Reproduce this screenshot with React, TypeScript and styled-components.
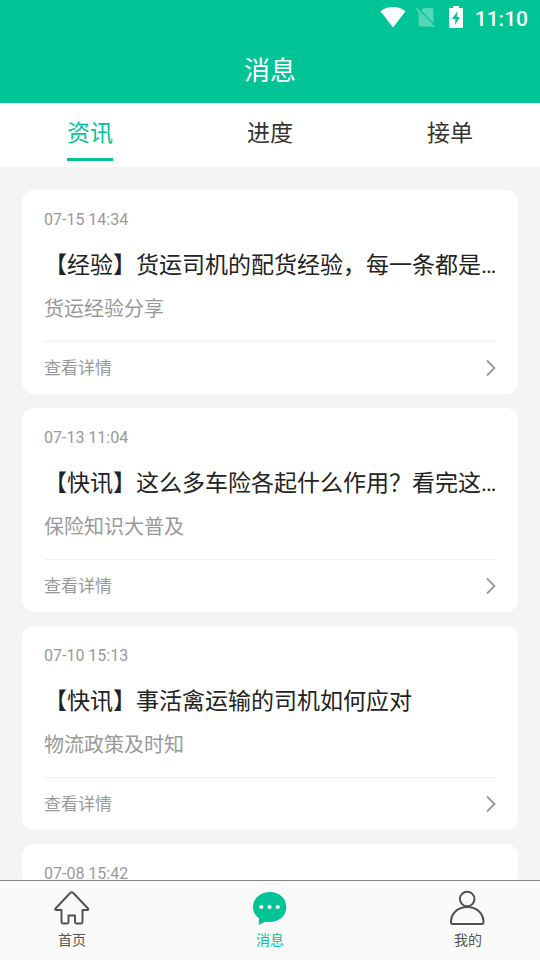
import React from "react";
import styled, { createGlobalStyle } from "styled-components";

const GREEN = "#00c496";

const GlobalStyle = createGlobalStyle`
  *, *::before, *::after { box-sizing: border-box; }
  body {
    margin: 0;
    background: #f4f4f4;
    font-family: Roboto, "Noto Sans CJK SC", sans-serif;
  }
  button { font: inherit; border: 0; background: none; padding: 0; cursor: pointer; }
  h1, h2, p { margin: 0; font-weight: 400; }
`;

const Screen = styled.div`
  display: flex;
  flex-direction: column;
  height: 100vh;
`;

const Header = styled.header`
  flex: none;
  background: ${GREEN};
  color: #fff;
`;

const StatusBar = styled.div`
  display: flex;
  align-items: flex-start;
  justify-content: flex-end;
  height: 36px;
  padding: 6px 12px 0 0;
`;

const StatusIcons = styled.div`
  display: flex;
  align-items: center;
  gap: 9px;
  margin-right: 12px;
  svg { display: block; }
`;

const Clock = styled.time`
  font-size: 21px;
  font-weight: 500;
  line-height: 26px;
`;

const PageTitle = styled.h1`
  padding: 16px 0 12px;
  font-size: 26px;
  line-height: 39px;
  text-align: center;
`;

const Tabs = styled.div`
  flex: none;
  display: flex;
  height: 64px;
  background: #fff;
`;

const TabButton = styled.button<{ $active: boolean }>`
  flex: 1;
  display: flex;
  justify-content: center;
  color: ${(p) => (p.$active ? GREEN : "#333")};
`;

const TabLabel = styled.span<{ $active: boolean }>`
  height: 58px;
  padding-top: 14px;
  border-bottom: 3px solid ${(p) => (p.$active ? GREEN : "transparent")};
  font-size: 23px;
  line-height: 34px;
`;

const List = styled.main`
  flex: 1;
  min-height: 0;
  overflow-y: auto;
  scrollbar-width: none;
  display: flex;
  flex-direction: column;
  gap: 14px;
  padding: 23px 22px;
`;

const Card = styled.article`
  flex: none;
  padding: 18px 22px 0;
  border-radius: 12px;
  background: #fff;
`;

const CardDate = styled.time`
  display: block;
  color: #999;
  font-size: 16px;
  line-height: 24px;
`;

const CardTitle = styled.h2`
  margin-top: 16px;
  color: #222;
  font-size: 23px;
  line-height: 36px;
  white-space: nowrap;
`;

const CardSummary = styled.p`
  margin-top: 10px;
  color: #999;
  font-size: 20px;
  line-height: 30px;
`;

const CardLink = styled.button`
  display: flex;
  align-items: center;
  justify-content: space-between;
  width: 100%;
  height: 53px;
  margin-top: 17px;
  border-top: 1px solid #f2f2f2;
  color: #999;
  font-size: 17px;
  line-height: 26px;
`;

const NavBar = styled.nav`
  flex: none;
  display: flex;
  justify-content: space-between;
  height: 80px;
  border-top: 1px solid #868686;
  background: #fafafa;
`;

const NavItem = styled.button<{ $active: boolean }>`
  display: flex;
  flex-direction: column;
  align-items: center;
  gap: 3px;
  width: 144px;
  padding-top: 9px;
  color: ${(p) => (p.$active ? GREEN : "#555")};
  font-size: 14px;
  line-height: 22px;
`;

const WifiIcon = () => (
  <svg width="26" height="22" viewBox="0 0 26 22" aria-hidden="true">
    <path d="M.5 5.300C4 2.500 8 1 13 1s9 1.500 12.500 4.300L13 21.500Z" fill="#fff" />
  </svg>
);

const NoSimIcon = () => (
  <svg width="25" height="22" viewBox="0 0 25 22" aria-hidden="true">
    <path d="M8.500 2h8.500q1.500 0 1.500 1.500v13.800L6 4.500ZM3.500 6.300 17.800 20.500H5q-1.500 0-1.500-1.500Z" fill="#fff" opacity=".32" />
    <path d="m1.300 2.500 18 18.500" stroke="#fff" strokeWidth="1.600" opacity=".35" />
  </svg>
);

const BatteryIcon = () => (
  <svg width="14" height="22" viewBox="0 0 14 22" aria-hidden="true">
    <path d="M4 0h6v2h3q1 0 1 1v18q0 1-1 1H1q-1 0-1-1V3q0-1 1-1h3Z" fill="#fff" />
    <path d="M8.500 5 3 13h3.500L6 19l5-8H7.800Z" fill={GREEN} />
  </svg>
);

const ChevronIcon = () => (
  <svg width="11" height="18" viewBox="0 0 11 18" aria-hidden="true">
    <path d="m2 1.500 7.500 7.500L2 16.500" fill="none" stroke="#999" strokeWidth="1.800" />
  </svg>
);

const HomeIcon = () => (
  <svg width="36" height="36" viewBox="0 0 36 36" aria-hidden="true">
    <path
      d="M16.200 3 1.500 18.500q-1 1.500.8 1.500H7.500v12q0 1.500 1.500 1.500H13q1.500 0 1.500-1.500V25.500h6.500V32q0 1.500 1.500 1.500H27q1.500 0 1.500-1.500V20h4.700q1.800 0 .8-1.500L19.300 3q-1.500-1.500-3.100 0Z"
      fill="none"
      stroke="#505050"
      strokeWidth="1.900"
      strokeLinejoin="round"
    />
  </svg>
);

const MessageIcon = () => (
  <svg width="36" height="36" viewBox="0 0 36 36" aria-hidden="true">
    <path
      d="M18 2C8.500 2 1 8.500 1 17c0 4.800 2.200 8.500 6 11.300l-.3 6.600 6.800-3.500c1.300.4 2.700.6 4.500.6 9.400 0 16.300-6.400 16.300-15C34.300 8.500 27.400 2 18 2Z"
      fill={GREEN}
    />
    <circle cx="9.300" cy="17" r="2.100" fill="#fff" />
    <circle cx="17.500" cy="17" r="2.100" fill="#fff" />
    <circle cx="25.700" cy="17" r="2.100" fill="#fff" />
  </svg>
);

const ProfileIcon = () => (
  <svg width="36" height="36" viewBox="0 0 36 36" aria-hidden="true">
    <g fill="none" stroke="#505050" strokeWidth="2" strokeLinejoin="round">
      <circle cx="17.200" cy="9" r="7.300" />
      <path d="M1 32C1 23.500 7.800 17 17.200 17S33.500 23.500 33.500 32q0 2-1.800 2H2.800q-1.800 0-1.800-2Z" />
    </g>
  </svg>
);

const tabs = ["资讯", "进度", "接单"];

const articles = [
  { date: "07-15 14:34", title: "【经验】货运司机的配货经验，每一条都是…", summary: "货运经验分享" },
  { date: "07-13 11:04", title: "【快讯】这么多车险各起什么作用？看完这…", summary: "保险知识大普及" },
  { date: "07-10 15:13", title: "【快讯】事活禽运输的司机如何应对", summary: "物流政策及时知" },
  { date: "07-08 15:42", title: "", summary: "" },
];

const navItems = [
  { label: "首页", Icon: HomeIcon },
  { label: "消息", Icon: MessageIcon },
  { label: "我的", Icon: ProfileIcon },
];

export default function App() {
  const [tab, setTab] = React.useState("资讯");
  return (
    <Screen>
      <GlobalStyle />
      <Header>
        <StatusBar>
          <StatusIcons>
            <WifiIcon />
            <NoSimIcon />
            <BatteryIcon />
          </StatusIcons>
          <Clock>11:10</Clock>
        </StatusBar>
        <PageTitle>消息</PageTitle>
      </Header>
      <Tabs role="tablist">
        {tabs.map((name) => (
          <TabButton
            key={name}
            role="tab"
            aria-selected={tab === name}
            $active={tab === name}
            onClick={() => setTab(name)}
          >
            <TabLabel $active={tab === name}>{name}</TabLabel>
          </TabButton>
        ))}
      </Tabs>
      <List>
        {articles.map((a) => (
          <Card key={a.date}>
            <CardDate>{a.date}</CardDate>
            {a.title && (
              <>
                <CardTitle>{a.title}</CardTitle>
                <CardSummary>{a.summary}</CardSummary>
                <CardLink>
                  <span>查看详情</span>
                  <ChevronIcon />
                </CardLink>
              </>
            )}
          </Card>
        ))}
      </List>
      <NavBar>
        {navItems.map(({ label, Icon }) => (
          <NavItem key={label} $active={label === "消息"}>
            <Icon />
            <span>{label}</span>
          </NavItem>
        ))}
      </NavBar>
    </Screen>
  );
}
